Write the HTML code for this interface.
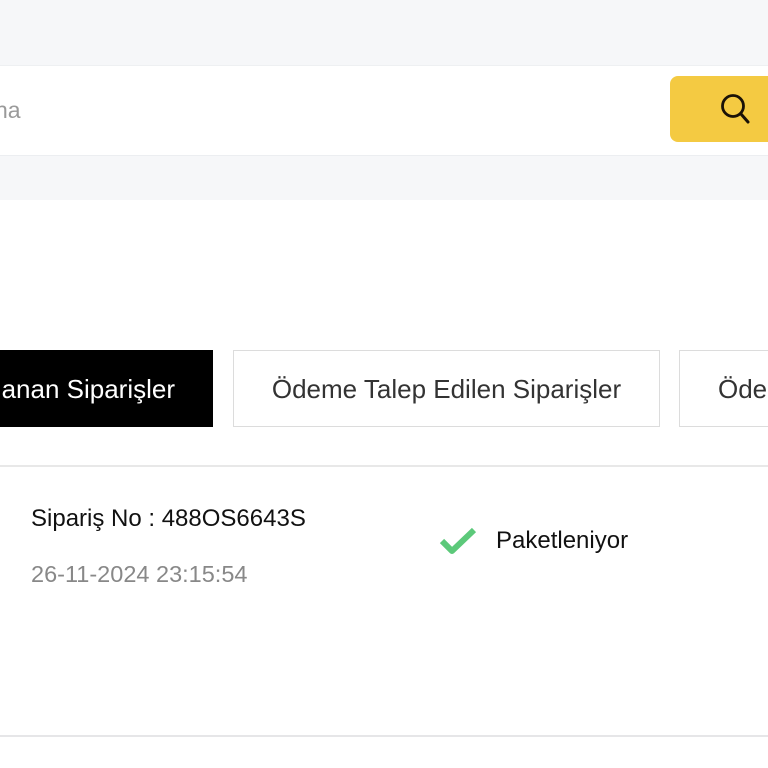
<!DOCTYPE html>
<html><head><meta charset="utf-8"><style>
html,body{margin:0;padding:0;width:768px;height:768px;overflow:hidden;background:#fff;font-family:"Liberation Sans",Arial,sans-serif;}
.abs{position:absolute;white-space:nowrap;}
</style></head><body>
<div class="abs" style="left:0;top:0;width:768px;height:200px;background:#f6f7f9"></div>
<div class="abs" style="left:0;top:65px;width:768px;height:89px;background:#fff;border-top:1px solid #eef0f2;border-bottom:1px solid #eceef1"></div>
<div class="abs" style="left:-5px;top:96px;font-size:23px;color:#9a9a9a;line-height:28px">na</div>
<div class="abs" style="left:670px;top:76px;width:110px;height:66px;background:#f4ca42;border-radius:8px"></div>
<svg class="abs" style="left:716px;top:90px" width="40" height="40" viewBox="0 0 40 40"><circle cx="17" cy="16" r="10.5" fill="none" stroke="#1a1207" stroke-width="2.8"/><line x1="25" y1="24" x2="32" y2="32" stroke="#1a1207" stroke-width="3" stroke-linecap="round"/></svg>

<div class="abs" style="left:0;top:350px;width:213px;height:77px;background:#000"></div>
<div class="abs" style="top:374px;font-size:26px;color:#fff;line-height:30px;right:593px">anan Siparişler</div>
<div class="abs" style="left:233px;top:350px;width:425px;height:75px;border:1px solid #dcdcdc"></div>
<div class="abs" style="left:233px;top:374px;width:427px;text-align:center;font-size:26px;color:#333;line-height:30px">Ödeme Talep Edilen Siparişler</div>
<div class="abs" style="left:679px;top:350px;width:200px;height:75px;border:1px solid #dcdcdc"></div>
<div class="abs" style="left:718px;top:374px;font-size:26px;color:#333;line-height:30px">Ödeme</div>

<div class="abs" style="left:0;top:465px;width:768px;height:2px;background:#e8e8e8"></div>
<div class="abs" style="left:31px;top:505px;font-size:24px;color:#111;line-height:28px">Sipariş No : 488OS6643S</div>
<div class="abs" style="left:31px;top:560px;font-size:23.5px;color:#888;line-height:28px">26-11-2024 23:15:54</div>
<svg class="abs" style="left:438px;top:526px" width="40" height="30" viewBox="0 0 40 30"><path d="M4 15 L14 25 L36 4" fill="none" stroke="#5cc97a" stroke-width="6" stroke-linejoin="round"/></svg>
<div class="abs" style="left:496px;top:527px;font-size:24px;color:#111;line-height:28px">Paketleniyor</div>
<div class="abs" style="left:0;top:735px;width:768px;height:2px;background:#e6e6e8"></div>
</body></html>
